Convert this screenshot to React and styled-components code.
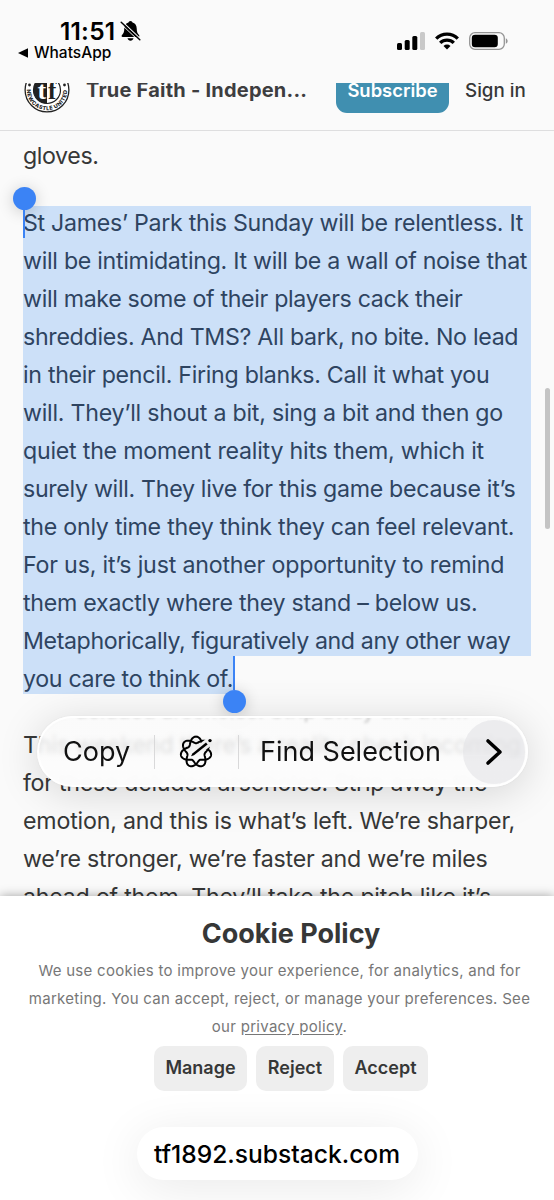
import React from "react";
import styled, { createGlobalStyle } from "styled-components";

const GlobalStyle = createGlobalStyle`
  * { box-sizing: border-box; }
  body { margin: 0; background: #fafafa; }
`;

const Screen = styled.div`
  position: relative;
  display: flex;
  flex-direction: column;
  width: 554px;
  height: 1200px;
  overflow: hidden;
  background: #fafafa;
  color: #363737;
  font-family: Inter, "Liberation Sans", sans-serif;
`;

const Text = styled.span`
  display: block;
  white-space: nowrap;
  letter-spacing: ${(p) => p.$ls || 0}px;
`;

/* Status bar */
const StatusBar = styled.div`
  display: flex;
  justify-content: space-between;
  flex: none;
  height: 83px;
  padding: 18px 46px 0 18px;
  color: #000;
`;
const StatusLeft = styled.div`
  display: flex;
  flex-direction: column;
`;
const ClockRow = styled.div`
  display: flex;
  align-items: center;
  gap: 5px;
  height: 26px;
  padding-left: 42px;
  font-size: 24.5px;
  font-weight: 600;
  line-height: 26px;
`;
const BackRow = styled.div`
  display: flex;
  align-items: center;
  gap: 5px;
  height: 17px;
  font-size: 15.5px;
  font-weight: 500;
  line-height: 17px;
`;
const StatusIcons = styled.div`
  display: flex;
  align-items: center;
  gap: 10px;
  height: 46px;
`;

/* Publication header */
const Header = styled.header`
  flex: none;
  height: 48px;
  overflow: hidden;
  border-bottom: 1px solid #dededf;
`;
const HeaderRow = styled.div`
  display: flex;
  align-items: center;
  height: 46px;
  margin-top: -16px;
  padding-left: 24px;
`;
const PublicationName = styled(Text)`
  width: 233px;
  margin-left: 16px;
  font-size: 20px;
  font-weight: 700;
  color: #3d3d3f;
`;
const SubscribeButton = styled.button`
  display: flex;
  align-items: center;
  justify-content: center;
  width: 113px;
  height: 46px;
  margin-left: 17px;
  padding: 0 0 1px;
  border: 0;
  border-radius: 11px;
  background: #408fb0;
  color: #fff;
  font: 600 18.4px/24px Inter, sans-serif;
`;
const SignIn = styled(Text)`
  margin-left: 16px;
  font-size: 18.8px;
  font-weight: 500;
`;

/* Article */
const Article = styled.main`
  flex: none;
  height: 765px;
  padding: 6px 23px 0;
  overflow: hidden;
  font-size: 23.2px;
`;
const Line = styled(Text)`
  height: 38px;
  line-height: 38px;
`;
const Selection = styled.div`
  margin-top: 31px;
  color: #2e4461;
`;
const SelectedLine = styled(Text)`
  height: 38px;
  line-height: 34px;
`;
const SelectedBlock = styled.div`
  width: 508px;
  height: 450px;
  background: #cce0f8;
`;
const SelectedTail = styled.div`
  width: 211px;
  height: 38px;
  padding-top: 6px;
  background: #cce0f8;
`;
const Paragraph = styled.div`
  margin-top: 32px;
`;

/* Selection handles */
const Handle = styled.div`
  position: absolute;
  left: ${(p) => p.$x}px;
  top: ${(p) => p.$y}px;
  display: flex;
  flex-direction: ${(p) => (p.$end ? "column-reverse" : "column")};
  align-items: center;
  width: 24px;
`;
const Knob = styled.div`
  width: 23px;
  height: 23px;
  border-radius: 50%;
  background: #3b83f5;
  box-shadow: 0 2px 16px rgba(0, 0, 0, 0.2);
`;
const Stem = styled.div`
  width: 2.5px;
  height: ${(p) => p.$h}px;
  background: #3b83f5;
`;
const ScrollThumb = styled.div`
  position: absolute;
  right: 4px;
  top: 388px;
  width: 5px;
  height: 141px;
  border-radius: 3px;
  background: #c4c4c4;
`;

/* Edit menu */
const EditMenu = styled.div`
  position: absolute;
  left: 37px;
  top: 716px;
  display: flex;
  align-items: center;
  width: 491px;
  height: 71px;
  padding: 0 1px 0 24px;
  overflow: hidden;
  border: 2px solid rgba(255, 255, 255, 0.95);
  border-radius: 36px;
  background: linear-gradient(rgba(250, 250, 250, 0.86) 55%, rgba(252, 252, 252, 0.985) 68%);
  backdrop-filter: blur(2.2px);
  color: #111;

  /* light bent along the glass rim repeats the covered line */
  &::before {
    content: "deluded arseholes. Strip away the them";
    position: absolute;
    left: 36px;
    top: -20px;
    font-size: 21px;
    line-height: 26px;
    white-space: nowrap;
    color: rgba(0, 0, 0, 0.24);
    filter: blur(1.8px);
  }
`;
const MenuShadow = styled.div`
  position: absolute;
  left: 37px;
  top: 716px;
  width: 491px;
  height: 71px;
  border-radius: 36px;
  box-shadow: 0 6px 42px rgba(0, 0, 0, 0.15), 0 0 2px rgba(0, 0, 0, 0.06);
`;
const MenuLabel = styled(Text)`
  position: relative;
  flex: none;
  width: ${(p) => p.$w}px;
  padding: 1px 0 0 ${(p) => p.$pad || 0}px;
  font-size: 27px;
  line-height: 36px;
`;
const Divider = styled.i`
  flex: none;
  width: 1px;
  height: 34px;
  background: #d9d9da;
`;
const IconSlot = styled.div`
  display: flex;
  flex: none;
  justify-content: center;
  width: 83px;
  padding-right: 2px;
`;
const MoreButton = styled.button`
  display: flex;
  flex: none;
  align-items: center;
  justify-content: center;
  width: 62px;
  height: 64px;
  margin-left: auto;
  padding: 0;
  border: 0;
  border-radius: 32px;
  background: rgba(226, 226, 230, 0.6);
`;

/* Cookie panel */
const CookiePanel = styled.section`
  position: relative;
  display: flex;
  flex-direction: column;
  align-items: center;
  flex: 1;
  padding-top: 21px;
  background: #fff;
  box-shadow: 0 0 10px rgba(0, 0, 0, 0.35);
`;
const CookieTitle = styled.h2`
  margin: 0 0 0 28px;
  font-size: 27px;
  font-weight: 700;
  line-height: 34px;
`;
const CookieCopy = styled.div`
  display: flex;
  flex-direction: column;
  align-items: center;
  margin: 6px 0 0 5px;
  font-size: 15px;
  line-height: 28px;
  color: #777;
`;
const PolicyLink = styled.a`
  text-decoration: underline;
  text-underline-offset: 2px;
`;
const ButtonRow = styled.div`
  display: flex;
  gap: 9px;
  margin: 4.5px 0 0 28px;
`;
const CookieButton = styled.button`
  width: ${(p) => p.$w}px;
  height: 45px;
  padding: 0;
  border: 0;
  border-radius: 10px;
  background: #eee;
  color: #363737;
  font: 600 18px/24px Inter, sans-serif;
`;
const AddressPill = styled.div`
  display: flex;
  align-items: center;
  justify-content: center;
  width: 281px;
  height: 53px;
  margin-top: 36.5px;
  border-radius: 27px;
  background: #fff;
  box-shadow: 0 8px 50px rgba(0, 0, 0, 0.09);
  color: #000;
  font-size: 24.6px;
  font-weight: 500;
`;

const MutedBell = () => (
  <svg width="21" height="22" viewBox="0 0 21 22">
    <path d="M10.5 1c-1.2 0-1.8.8-2 1.5C5.900 3.300 4.400 5.400 4.300 8.300c-.1 3.900-.7 5.200-2.300 6.800-.8.800-.5 1.900.7 1.900h15.600c1.200 0 1.500-1.100.7-1.900-1.600-1.600-2.200-2.900-2.300-6.800-.1-2.900-1.600-5-4.200-5.800-.2-.7-.8-1.500-2-1.500zM7.500 18.300h6c-.4 1.500-1.500 2.500-3 2.500s-2.600-1-3-2.500z" />
    <path d="M2 1.500 20.500 19" stroke="#fafafa" strokeWidth="1.300" />
    <path d="M.5 3.500 18.500 20.500" stroke="#fafafa" strokeWidth="1" />
    <path d="M1.200 2.200 19.800 19.800" stroke="#000" strokeWidth="1.500" strokeLinecap="round" />
  </svg>
);
const BackArrow = () => (
  <svg width="11" height="10" viewBox="0 0 11 10">
    <path d="M0 5 10 .3v9.400z" />
  </svg>
);
const Signal = () => (
  <svg width="28" height="18" viewBox="0 0 28 18">
    <rect x="0" y="11" width="5" height="7" rx="1.500" />
    <rect x="7.700" y="8" width="5" height="10" rx="1.500" />
    <rect x="15.300" y="4" width="5" height="14" rx="1.500" />
    <rect x="23" y="0" width="5" height="18" rx="1.500" fill="#c9c9c9" />
  </svg>
);
const Wifi = () => (
  <svg width="24" height="18" viewBox="0 0 24 18" fill="none" stroke="#000" strokeWidth="3.300">
    <path d="M1.200 6.600a15.200 15.200 0 0 1 21.600 0" />
    <path d="M5.200 10.900a9.600 9.600 0 0 1 13.600 0" />
    <path d="M12 17.600 8.500 14a5 5 0 0 1 7 0z" fill="#000" stroke="none" />
  </svg>
);
const Battery = () => (
  <svg width="39" height="18" viewBox="0 0 39 18">
    <rect x=".7" y=".7" width="34.600" height="16.600" rx="5.300" fill="none" stroke="#949494" strokeWidth="1.300" />
    <rect x="2.800" y="2.800" width="26" height="12.400" rx="3.300" />
    <path d="M36.800 6.200c1.200.6 1.800 1.500 1.800 2.800s-.6 2.200-1.800 2.800z" fill="#949494" />
  </svg>
);
const Crest = () => (
  <svg width="46" height="46" viewBox="0 0 46 46">
    <defs>
      <path id="crestArc" d="M2.900 20.500A20.250 20.250 0 1 0 43.100 20.500" />
    </defs>
    <circle cx="23" cy="23" r="21.900" fill="#fff" stroke="#222" strokeWidth="1.300" />
    <circle cx="23" cy="23" r="13.500" fill="#fff" stroke="#222" strokeWidth="1.200" />
    <path d="M23 9.500a13.500 13.500 0 0 0 0 27z" fill="#222" />
    <circle cx="5.500" cy="18" r="1.400" fill="#222" />
    <circle cx="40.500" cy="18" r="1.400" fill="#222" />
    <text x="13.500" y="32" fontFamily="Liberation Serif, serif" fontWeight="700" fontSize="26" fill="#fff">t</text>
    <text x="24" y="32" fontFamily="Liberation Serif, serif" fontWeight="700" fontSize="25" fill="#222">f</text>
    <text fontFamily="Inter, sans-serif" fontWeight="800" fontSize="5.400" fill="#222">
      <textPath href="#crestArc" startOffset="2" textLength="63">NEWCASTLE UNITED</textPath>
    </text>
  </svg>
);

const knot = Array.from({ length: 281 }, (_, i) => {
  const t = (i / 280) * Math.PI * 4;
  const r = 12.100 + 3.300 * Math.cos(3.5 * t);
  return `${(18 + r * Math.sin(t)).toFixed(2)} ${(18 - r * Math.cos(t)).toFixed(2)}`;
}).join("L");
const WritingTools = () => (
  <svg width="36" height="36" viewBox="0 0 36 36" fill="none" stroke="#000">
    <mask id="pencilGap">
      <path d="M0 0h36v36H0z" fill="#fff" stroke="none" />
      <path d="M20 16.500 36 4" stroke="#000" strokeWidth="8.500" />
    </mask>
    <path d={`M${knot}Z`} strokeWidth="2" mask="url(#pencilGap)" />
    <path d="M13 22.200 14.400 19.400 28 8.400l1.600 2L16 21.300z" fill="#000" stroke="none" />
    <circle cx="32" cy="6.600" r="1.700" fill="#000" stroke="none" />
  </svg>
);
const Chevron = () => (
  <svg width="18" height="28" viewBox="0 0 18 28" fill="none" stroke="#000" strokeWidth="3.600" strokeLinecap="round" strokeLinejoin="round">
    <path d="M3 3 15 14 3 25" />
  </svg>
);

const selected = [
  ["St James’ Park this Sunday will be relentless. It", -0.29],
  ["will be intimidating. It will be a wall of noise that", -0.29],
  ["will make some of their players cack their", -0.33],
  ["shreddies. And TMS? All bark, no bite. No lead", -0.3],
  ["in their pencil. Firing blanks. Call it what you", -0.31],
  ["will. They’ll shout a bit, sing a bit and then go", -0.24],
  ["quiet the moment reality hits them, which it", -0.23],
  ["surely will. They live for this game because it’s", -0.31],
  ["the only time they think they can feel relevant.", -0.26],
  ["For us, it’s just another opportunity to remind", -0.2],
  ["them exactly where they stand – below us.", -0.27],
  ["Metaphorically, figuratively and any other way", -0.39],
];
const following = [
  ["This weekend there’s a reality check incoming", -0.15],
  ["for these deluded arseholes. Strip away the", -0.28],
  ["emotion, and this is what’s left. We’re sharper,", -0.2],
  ["we’re stronger, we’re faster and we’re miles", -0.23],
  ["ahead of them. They’ll take the pitch like it’s", -0.22],
];

export default function App() {
  return (
    <Screen>
      <GlobalStyle />
      <StatusBar>
        <StatusLeft>
          <ClockRow><Text $ls={0.2}>11:51</Text><MutedBell /></ClockRow>
          <BackRow><BackArrow /><Text>WhatsApp</Text></BackRow>
        </StatusLeft>
        <StatusIcons><Signal /><Wifi /><Battery /></StatusIcons>
      </StatusBar>
      <Header>
        <HeaderRow>
          <Crest />
          <PublicationName $ls={0.22}>True Faith - Indepen...</PublicationName>
          <SubscribeButton>Subscribe</SubscribeButton>
          <SignIn>Sign in</SignIn>
        </HeaderRow>
      </Header>
      <Article>
        <Line $ls={-0.4}>gloves.</Line>
        <Selection>
          <SelectedBlock>
            {selected.map(([t, ls]) => <SelectedLine key={t} $ls={ls}>{t}</SelectedLine>)}
          </SelectedBlock>
          <SelectedTail><SelectedLine $ls={-0.33}>you care to think of.</SelectedLine></SelectedTail>
        </Selection>
        <Paragraph>
          {following.map(([t, ls]) => <Line key={t} $ls={ls}>{t}</Line>)}
        </Paragraph>
      </Article>
      <CookiePanel>
        <CookieTitle>Cookie Policy</CookieTitle>
        <CookieCopy>
          <Text $ls={0.27}>We use cookies to improve your experience, for analytics, and for</Text>
          <Text $ls={0.28}>marketing. You can accept, reject, or manage your preferences. See</Text>
          <Text $ls={0.28}>our <PolicyLink>privacy policy</PolicyLink>.</Text>
        </CookieCopy>
        <ButtonRow>
          <CookieButton $w={93}>Manage</CookieButton>
          <CookieButton $w={78}>Reject</CookieButton>
          <CookieButton $w={85}>Accept</CookieButton>
        </ButtonRow>
        <AddressPill><Text>tf1892.substack.com</Text></AddressPill>
      </CookiePanel>
      <ScrollThumb />
      <MenuShadow />
      <Handle $x={12} $y={187}><Knob /><Stem $h={28} /></Handle>
      <Handle $x={222} $y={656} $end><Knob /><Stem $h={34} /></Handle>
      <EditMenu>
        <MenuLabel $w={91}>Copy</MenuLabel>
        <Divider />
        <IconSlot><WritingTools /></IconSlot>
        <Divider />
        <MenuLabel $w={210} $pad={21}>Find Selection</MenuLabel>
        <MoreButton><Chevron /></MoreButton>
      </EditMenu>
    </Screen>
  );
}
